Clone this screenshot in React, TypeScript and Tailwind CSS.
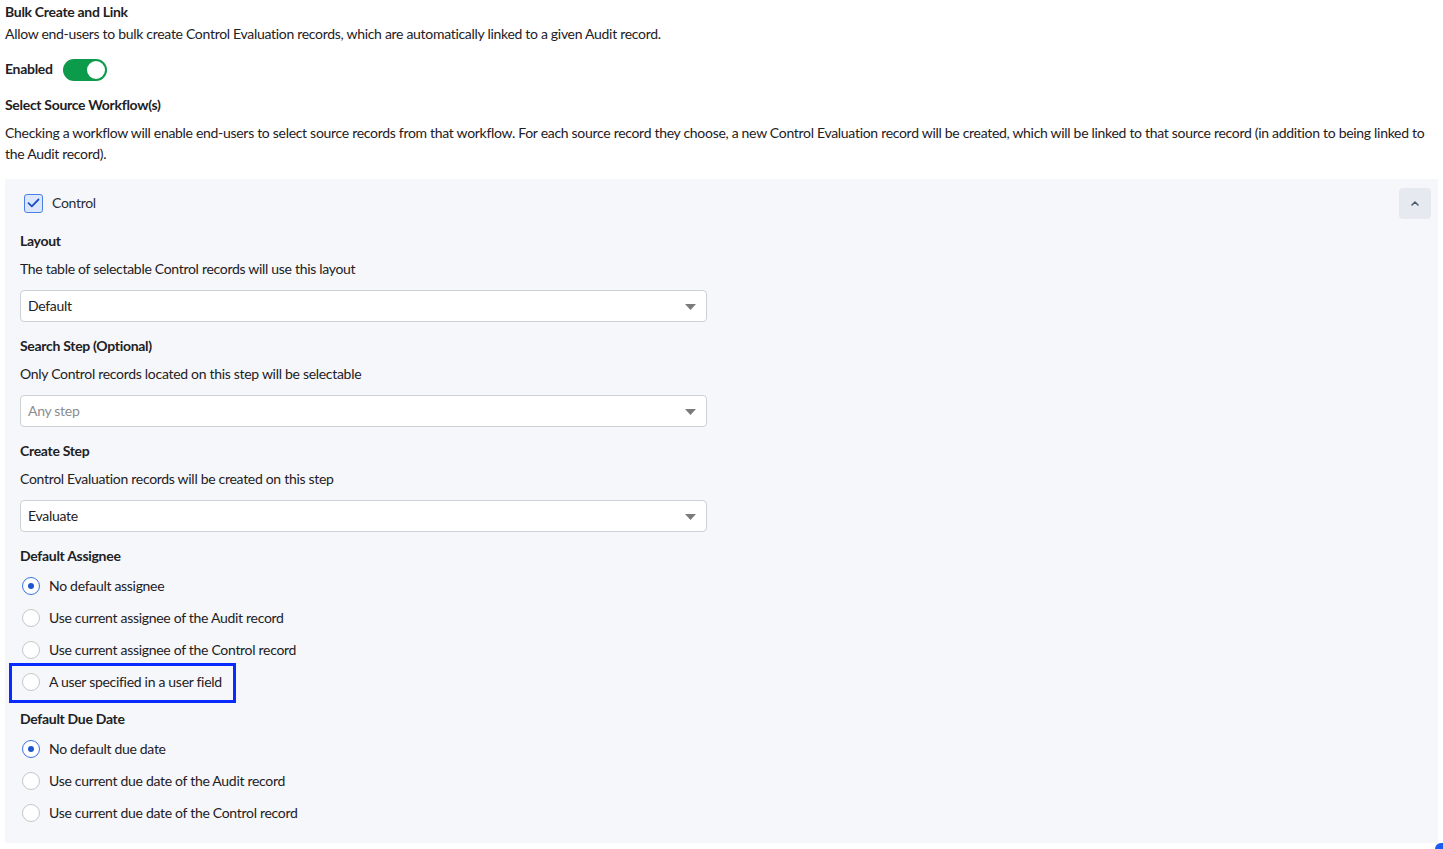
import React from "react";

const font = { fontFamily: '"Source Sans Pro", Lato, "Noto Sans", sans-serif' };

function Caret() {
  return (
    <svg width="11" height="6" viewBox="0 0 11 6" className="absolute right-[10px] top-[13px]">
      <path d="M0 0 L11 0 L5.5 6 Z" fill="#7b7b7b" />
    </svg>
  );
}

function Select({ value, placeholder }: { value: string; placeholder?: boolean }) {
  return (
    <div className="relative mt-[11px] h-[32px] w-[687px] rounded-[4px] border border-[#cdd0d6] bg-white">
      <div className={`pl-[7px] leading-[29px] text-[14px] ${placeholder ? "text-[#8a8d92]" : "text-[#1e2124]"}`}>{value}</div>
      <Caret />
    </div>
  );
}

function Radio({ label, checked, mt, highlight }: { label: string; checked?: boolean; mt: string; highlight?: boolean }) {
  return (
    <div className={`relative flex h-[20px] items-center ${mt}`}>
      <div
        className={`ml-[2px] flex h-[18px] w-[18px] items-center justify-center rounded-full border bg-white ${
          checked ? "border-[#3b73e6]" : "border-[#c4c7cc]"
        }`}
      >
        {checked && <div className="h-[6px] w-[6px] rounded-full bg-[#1f55cf]" />}
      </div>
      <span className="ml-[9px] -mt-[2px] text-[14px] text-[#1e2124]">{label}</span>
      {highlight && (
        <div className="pointer-events-none absolute left-[-11px] top-[-9px] h-[40px] w-[227px] border-[3px] border-[#0a2bff]" />
      )}
    </div>
  );
}

export default function App() {
  return (
    <div className="relative h-[849px] w-[1443px] overflow-hidden bg-white text-[#1e2124] tracking-[-0.3px]" style={font}>
      <div className="px-[5px]">
        <div className="h-[24px] text-[14px] font-bold leading-[24px]">Bulk Create and Link</div>
        <div className="h-[20px] text-[14px] leading-[20px]">
          Allow end-users to bulk create Control Evaluation records, which are automatically linked to a given Audit record.
        </div>
        <div className="mt-[15px] flex h-[22px] items-center">
          <span className="-mt-[3px] text-[14px] font-bold">Enabled</span>
          <div className="ml-[10px] flex h-[22px] w-[44px] items-center justify-end rounded-full bg-[#0c9a4b] pr-[2px]">
            <div className="h-[18px] w-[18px] rounded-full bg-white" />
          </div>
        </div>
        <div className="mt-[14px] h-[20px] text-[14px] font-bold leading-[20px]">Select Source Workflow(s)</div>
        <div className="mt-[7px] text-[14px] leading-[21px]">
          Checking a workflow will enable end-users to select source records from that workflow. For each source record they choose, a new Control Evaluation record will be created, which will be linked to that source record (in addition to being linked to the Audit record).
        </div>

        <div className="mt-[15px] bg-[#f5f7fa] pb-[20px] pl-[15px] pr-[7px] pt-[8px]">
          <div className="flex h-[32px] items-center">
            <div className="ml-[4px] flex h-[19px] w-[19px] items-center justify-center rounded-[3px] border border-[#4a7fe3] bg-[#dce7fd]">
              <svg width="13" height="10" viewBox="0 0 13 10">
                <path d="M1.5 5.2 L4.8 8.3 L11.5 1.5" fill="none" stroke="#1b4fc4" strokeWidth="1.8" strokeLinecap="round" strokeLinejoin="round" />
              </svg>
            </div>
            <span className="ml-[9px] -mt-[2px] text-[14px] text-[#2b2e33]">Control</span>
            <div className="ml-auto flex h-[31px] w-[32px] items-center justify-center rounded-[4px] bg-[#e6eaf0]">
              <svg width="8" height="5" viewBox="0 0 8 5">
                <path d="M1 4 L4 1 L7 4" fill="none" stroke="#4b5a6b" strokeWidth="1.5" strokeLinecap="round" strokeLinejoin="round" />
              </svg>
            </div>
          </div>

          <div className="mt-[12px] h-[20px] text-[14px] font-bold leading-[20px]">Layout</div>
          <div className="mt-[8px] h-[20px] text-[14px] leading-[20px]">The table of selectable Control records will use this layout</div>
          <Select value="Default" />

          <div className="mt-[14px] h-[20px] text-[14px] font-bold leading-[20px]">Search Step (Optional)</div>
          <div className="mt-[8px] h-[20px] text-[14px] leading-[20px]">Only Control records located on this step will be selectable</div>
          <Select value="Any step" placeholder />

          <div className="mt-[14px] h-[20px] text-[14px] font-bold leading-[20px]">Create Step</div>
          <div className="mt-[8px] h-[20px] text-[14px] leading-[20px]">Control Evaluation records will be created on this step</div>
          <Select value="Evaluate" />

          <div className="mt-[14px] h-[20px] text-[14px] font-bold leading-[20px]">Default Assignee</div>
          <Radio mt="mt-[10px]" checked label="No default assignee" />
          <Radio mt="mt-[12px]" label="Use current assignee of the Audit record" />
          <Radio mt="mt-[12px]" label="Use current assignee of the Control record" />
          <Radio mt="mt-[12px]" label="A user specified in a user field" highlight />

          <div className="mt-[17px] h-[20px] text-[14px] font-bold leading-[20px]">Default Due Date</div>
          <Radio mt="mt-[10px]" checked label="No default due date" />
          <Radio mt="mt-[12px]" label="Use current due date of the Audit record" />
          <Radio mt="mt-[12px]" label="Use current due date of the Control record" />
        </div>
      </div>
      <div className="absolute left-[1435px] top-[843px] h-[20px] w-[20px] rounded-tl-[6px] bg-[#1a5cf0]" />
    </div>
  );
}
